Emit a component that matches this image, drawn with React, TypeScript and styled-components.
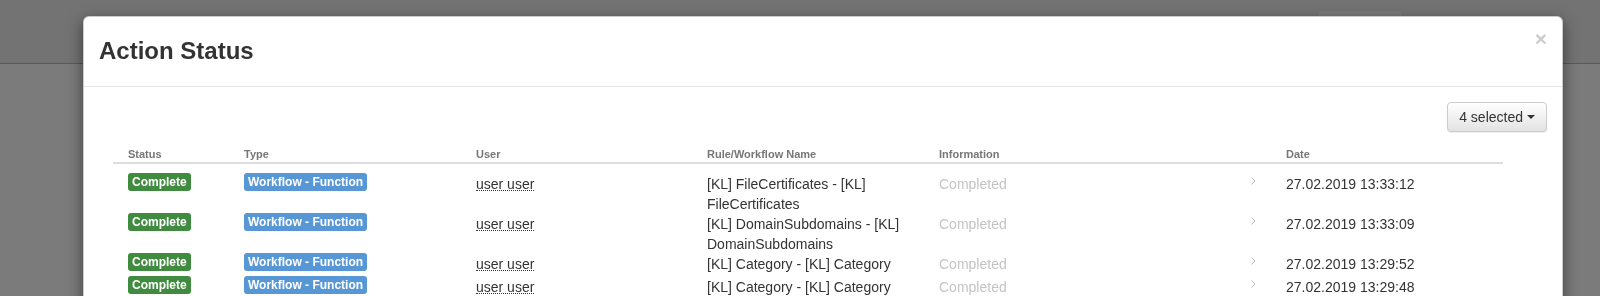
import React from "react";
import styled, { createGlobalStyle } from "styled-components";

const GlobalStyle = createGlobalStyle`
  html, body {
    margin: 0;
    padding: 0;
  }
  body {
    font-family: "Liberation Sans", Arial, Helvetica, sans-serif;
    font-size: 14px;
    line-height: 20px;
    color: #333;
    background: #f6f6f6;
    overflow: hidden;
  }
`;

const Page = styled.div`
    position: relative;
    height: 296px;
    overflow: hidden;
`;

const Navbar = styled.div`
    height: 64px;
    box-sizing: border-box;
    background: #e6e6e6;
    border-bottom: 1px solid #b4b4b4;
    display: flex;
    justify-content: flex-end;
    padding: 11px 199px 0 0;
`;

const NavButton = styled.div`
    width: 82px;
    height: 34px;
    border-radius: 4px;
    background: #f7f7f7;
`;

const Backdrop = styled.div`
    position: fixed;
    inset: 0;
    background: rgba(0, 0, 0, 0.5);
`;

const Modal = styled.div`
    position: absolute;
    top: 16px;
    left: 83px;
    width: 1480px;
    box-sizing: border-box;
    background: #fff;
    border: 1px solid rgba(0, 0, 0, 0.2);
    border-radius: 6px;
    box-shadow: 0 5px 15px rgba(0, 0, 0, 0.5);
`;

const Header = styled.div`
    display: flex;
    justify-content: space-between;
    align-items: flex-start;
    padding: 17px 15px 18px;
    border-bottom: 1px solid #e5e5e5;
`;

const Title = styled.h4`
    margin: 0;
    font-size: 24px;
    line-height: 34px;
    font-weight: bold;
    color: #333;
`;

const Close = styled.button`
    margin-top: -6px;
    padding: 0;
    border: 0;
    background: transparent;
    font-family: inherit;
    font-size: 21px;
    font-weight: bold;
    line-height: 1;
    color: #000;
    text-shadow: 0 1px 0 #fff;
    opacity: 0.2;
    cursor: pointer;
`;

const Body = styled.div`
    padding: 15px;
`;

const Toolbar = styled.div`
    display: flex;
    justify-content: flex-end;
`;

const SelectButton = styled.button`
    display: inline-flex;
    align-items: center;
    gap: 4px;
    height: 30px;
    box-sizing: border-box;
    padding: 4px 11px;
    font-family: inherit;
    font-size: 14px;
    line-height: 20px;
    color: #333;
    border: 1px solid #ccc;
    border-radius: 4px;
    background-image: linear-gradient(to bottom, #fff 0, #e3e3e3 100%);
    box-shadow: inset 0 1px 0 rgba(255, 255, 255, 0.15),
        0 1px 1px rgba(0, 0, 0, 0.075);
`;

const Caret = styled.span`
    width: 0;
    height: 0;
    border-top: 4px solid #333;
    border-left: 4px solid transparent;
    border-right: 4px solid transparent;
`;

const Table = styled.div`
    width: 1390px;
    margin-left: 14px;
`;

const columns = "116px 232px 231px 232px 312px 35px 1fr";

const HeadRow = styled.div`
    display: grid;
    grid-template-columns: ${columns};
    padding: 14px 0 0 15px;
    border-bottom: 2px solid #ddd;
    font-size: 11px;
    line-height: 16px;
    font-weight: bold;
    color: #777;
`;

const Rows = styled.div`
    padding-top: 10px;
`;

const Row = styled.div`
    display: grid;
    grid-template-columns: ${columns};
    padding-left: 15px;
    min-height: 23px;
    font-size: 14px;
    line-height: 20px;
    align-items: start;
`;

const Badge = styled.span<{ $tone: "success" | "primary" }>`
    display: block;
    width: max-content;
    margin-top: -1px;
    padding: 0 4px;
    font-size: 12px;
    line-height: 18px;
    font-weight: bold;
    color: #fff;
    border-radius: 3px;
    background: ${(p) => (p.$tone === "success" ? "#408b40" : "#5897d6")};
`;

const UserName = styled.span`
    display: inline-block;
    line-height: 12px;
    border-bottom: 1px dotted #333;
`;

const Muted = styled.span`
    color: #c4c4c4;
`;

const ChevronCell = styled.div`
    padding-top: 3px;
    color: #bdbdbd;
    svg {
        display: block;
    }
`;

type ActionRow = { name: string; date: string };

const rows: ActionRow[] = [
    { name: "[KL] FileCertificates - [KL] FileCertificates", date: "27.02.2019 13:33:12" },
    { name: "[KL] DomainSubdomains - [KL] DomainSubdomains", date: "27.02.2019 13:33:09" },
    { name: "[KL] Category - [KL] Category", date: "27.02.2019 13:29:52" },
    { name: "[KL] Category - [KL] Category", date: "27.02.2019 13:29:48" },
];

const Chevron = () => (
    <svg width="5" height="8" viewBox="0 0 5 8">
        <polyline points="0.5,0.5 4,4 0.5,7.5" fill="none" stroke="currentColor" strokeWidth="1" />
    </svg>
);

export default function App() {
    return (
        <Page>
            <GlobalStyle />
            <Navbar>
                <NavButton />
            </Navbar>
            <Backdrop />
            <Modal>
                <Header>
                    <Title>Action Status</Title>
                    <Close>×</Close>
                </Header>
                <Body>
                    <Toolbar>
                        <SelectButton>
                            4 selected <Caret />
                        </SelectButton>
                    </Toolbar>
                    <Table>
                        <HeadRow>
                            <div>Status</div>
                            <div>Type</div>
                            <div>User</div>
                            <div>Rule/Workflow Name</div>
                            <div>Information</div>
                            <div />
                            <div>Date</div>
                        </HeadRow>
                        <Rows>
                            {rows.map((r, i) => (
                                <Row key={i}>
                                    <div>
                                        <Badge $tone="success">Complete</Badge>
                                    </div>
                                    <div>
                                        <Badge $tone="primary">Workflow - Function</Badge>
                                    </div>
                                    <div>
                                        <UserName>user user</UserName>
                                    </div>
                                    <div>{r.name}</div>
                                    <div>
                                        <Muted>Completed</Muted>
                                    </div>
                                    <ChevronCell>
                                        <Chevron />
                                    </ChevronCell>
                                    <div>{r.date}</div>
                                </Row>
                            ))}
                        </Rows>
                    </Table>
                </Body>
            </Modal>
        </Page>
    );
}
